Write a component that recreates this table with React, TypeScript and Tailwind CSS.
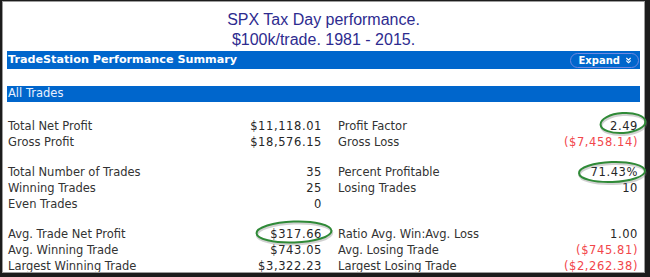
import React from "react";
import { ChevronsDown } from "lucide-react";

type Stat = { label: string; value: string; loss?: boolean };

// each group holds rows of [left, right] pairs
const groups: [Stat, Stat | null][][] = [
  [
    [
      { label: "Total Net Profit", value: "$11,118.01" },
      { label: "Profit Factor", value: "2.49" },
    ],
    [
      { label: "Gross Profit", value: "$18,576.15" },
      { label: "Gross Loss", value: "($7,458.14)", loss: true },
    ],
  ],
  [
    [
      { label: "Total Number of Trades", value: "35" },
      { label: "Percent Profitable", value: "71.43%" },
    ],
    [
      { label: "Winning Trades", value: "25" },
      { label: "Losing Trades", value: "10" },
    ],
    [{ label: "Even Trades", value: "0" }, null],
  ],
  [
    [
      { label: "Avg. Trade Net Profit", value: "$317.66" },
      { label: "Ratio Avg. Win:Avg. Loss", value: "1.00" },
    ],
    [
      { label: "Avg. Winning Trade", value: "$743.05" },
      { label: "Avg. Losing Trade", value: "($745.81)", loss: true },
    ],
    [
      { label: "Largest Winning Trade", value: "$3,322.23" },
      { label: "Largest Losing Trade", value: "($2,262.38)", loss: true },
    ],
  ],
];

const StatCell: React.FC<{ stat: Stat | null }> = ({ stat }) => {
  if (!stat) return <div />;
  return (
    <div className="flex items-center justify-between">
      <span className="text-[#333333]">{stat.label}</span>
      <span
        className={
          stat.loss
            ? "tracking-[0.6px] text-[#f2464a]"
            : "tracking-[0.6px] text-[#262626]"
        }
      >
        {stat.value}
      </span>
    </div>
  );
};

// hand-drawn green highlight rings
const Highlights = () => (
  <svg
    className="pointer-events-none absolute inset-0"
    width={650}
    height={277}
    viewBox="0 0 650 277"
    fill="none"
  >
    {[
      { cx: 623, cy: 123, rx: 22.5, ry: 10, r: -4 },
      { cx: 612, cy: 172, rx: 33, ry: 10, r: -2 },
      { cx: 294, cy: 232, rx: 37.5, ry: 10.5, r: -2 },
    ].map((e, i) => (
      <g key={i} transform={`rotate(${e.r} ${e.cx} ${e.cy})`}>
        <ellipse
          cx={e.cx + 0.5}
          cy={e.cy + 1.8}
          rx={e.rx}
          ry={e.ry}
          stroke="#7a7a7a"
          strokeOpacity={0.35}
          strokeWidth={2.5}
        />
        <ellipse cx={e.cx} cy={e.cy} rx={e.rx} ry={e.ry} stroke="#2f8a37" strokeWidth={2} />
      </g>
    ))}
  </svg>
);

export default function App() {
  return (
    <div className="relative h-[277px] w-[650px] overflow-hidden bg-[#1c1c1c] pb-[4px] pl-[2px] pr-[5px] pt-[1px]">
      <div className="flex h-full flex-col overflow-hidden border border-[#9c9c9c] bg-white">
        {/* Title */}
        <div className="pt-[8px] text-center font-['Liberation_Sans',Arial,sans-serif] text-[16px] leading-[20px] text-[#2d2b8f]">
          <div>SPX Tax Day performance.</div>
          <div>$100k/trade. 1981 - 2015.</div>
        </div>

        <div className="flex flex-col pl-[4px] pr-[4px] font-['DejaVu_Sans',Verdana,sans-serif]">
          {/* Summary header */}
          <div className="mt-[1px] flex h-[18px] items-center justify-between bg-[#0066cc] pl-[1px] pr-[1px]">
            <span className="text-[11.2px] font-bold text-white">TradeStation Performance Summary</span>
            <span className="flex h-[15px] items-center gap-[4px] rounded-full border border-[#7088e0] pl-[8px] pr-[5px] text-[10px] font-bold text-white">
              Expand
              <ChevronsDown size={9} strokeWidth={3} />
            </span>
          </div>

          {/* All Trades */}
          <div className="mt-[17px] flex h-[16px] items-center bg-[#0066cc] pl-[1px] text-[11.5px] text-[#e8f0ff]">
            All Trades
          </div>

          {/* Stats */}
          <div className="mt-[16px] flex flex-col gap-[14px] pl-[1px] text-[11.5px] leading-[16px]">
            {groups.map((rows, gi) => (
              <div key={gi} className="flex flex-col">
                {rows.map(([l, r], ri) => (
                  <div key={ri} className="grid grid-cols-[314px_300px] gap-x-[16px]">
                    <StatCell stat={l} />
                    <StatCell stat={r} />
                  </div>
                ))}
              </div>
            ))}
          </div>
        </div>
      </div>
      <Highlights />
    </div>
  );
}
